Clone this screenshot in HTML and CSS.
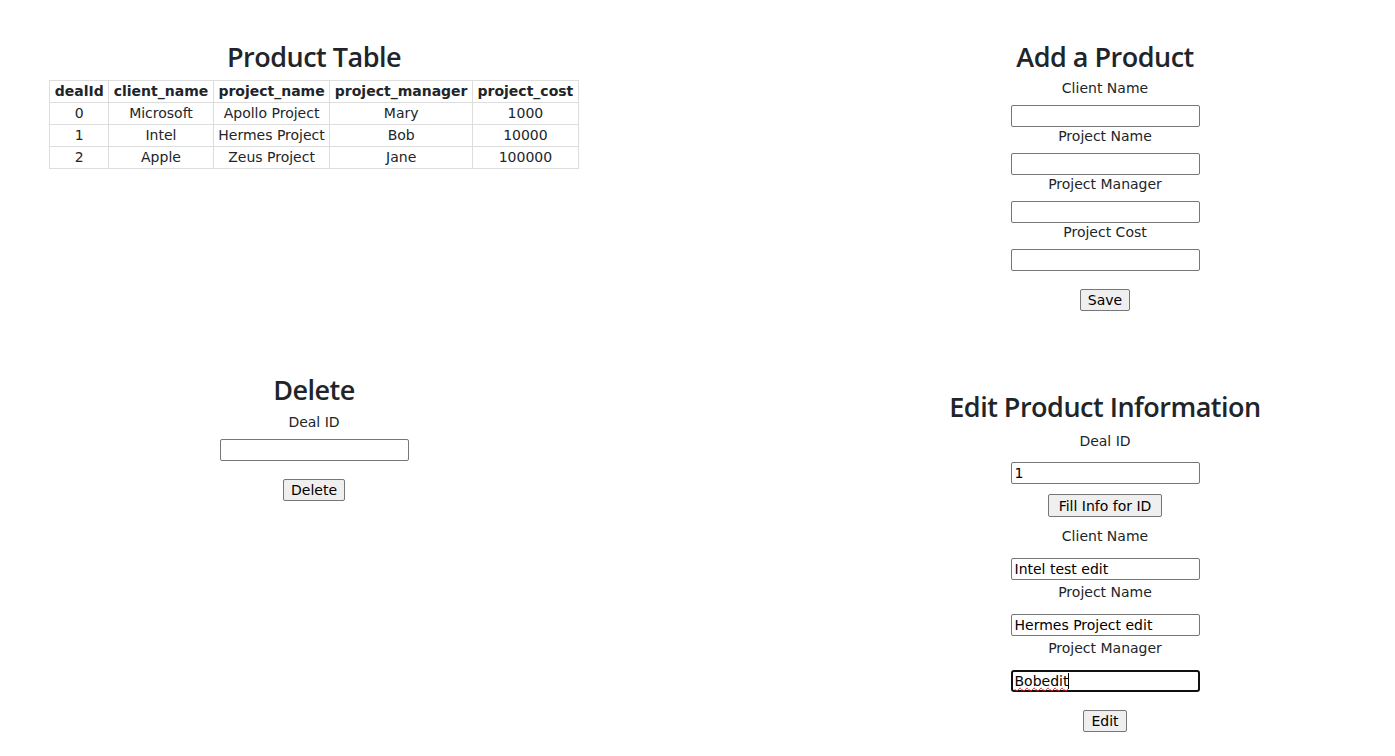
FILE: index.html
```html
<!DOCTYPE html>
<html lang="en">
<head>
<meta charset="utf-8">
<title>Products</title>
<link rel="stylesheet" href="styles.css">
</head>
<body>
<main class="page">
  <section class="panel panel-table">
    <h3 class="title">Product Table</h3>
    <table class="products">
      <thead>
        <tr><th>dealId</th><th>client_name</th><th>project_name</th><th>project_manager</th><th>project_cost</th></tr>
      </thead>
      <tbody>
        <tr><td>0</td><td>Microsoft</td><td>Apollo Project</td><td>Mary</td><td>1000</td></tr>
        <tr><td>1</td><td>Intel</td><td>Hermes Project</td><td>Bob</td><td>10000</td></tr>
        <tr><td>2</td><td>Apple</td><td>Zeus Project</td><td>Jane</td><td>100000</td></tr>
      </tbody>
    </table>
  </section>

  <section class="panel panel-add">
    <h3 class="title">Add a Product</h3>
    <form class="form form-add">
      <label class="lbl">Client Name</label>
      <input class="field" type="text">
      <label class="lbl">Project Name</label>
      <input class="field" type="text">
      <label class="lbl">Project Manager</label>
      <input class="field" type="text">
      <label class="lbl">Project Cost</label>
      <input class="field" type="text">
      <button class="btn btn-submit" type="button">Save</button>
    </form>
  </section>

  <section class="panel panel-delete">
    <h3 class="title">Delete</h3>
    <form class="form">
      <label class="lbl">Deal ID</label>
      <input class="field" type="text">
      <button class="btn btn-submit" type="button">Delete</button>
    </form>
  </section>

  <section class="panel panel-edit">
    <h3 class="title">Edit Product Information</h3>
    <form class="form form-edit">
      <label class="lbl lbl-edit lbl-first">Deal ID</label>
      <input class="field" type="text" value="1">
      <button class="btn btn-fill" type="button">Fill Info for ID</button>
      <label class="lbl lbl-edit lbl-after-btn">Client Name</label>
      <input class="field" type="text" value="Intel test edit">
      <label class="lbl lbl-edit">Project Name</label>
      <input class="field" type="text" value="Hermes Project edit">
      <label class="lbl lbl-edit">Project Manager</label>
      <div class="field-wrap">
        <input class="field field-focused" type="text" value="Bobedit">
        <span class="spell" aria-hidden="true">Bobedit</span>
      </div>
      <button class="btn btn-submit" type="button">Edit</button>
    </form>
  </section>
</main>
</body>
</html>
```

FILE: styles.css
```css
html, body {
  margin: 0;
  padding: 0;
  background: #ffffff;
}

body {
  font-family: "DejaVu Sans", Verdana, sans-serif;
  font-size: 14px;
  line-height: 19px;
  color: #212529;
}

.page {
  display: grid;
  grid-template-columns: 628px 1fr 580px;
  row-gap: 62px;
  padding-top: 40px;
}

.panel {
  display: flex;
  flex-direction: column;
  align-items: center;
  text-align: center;
}

.panel-table { grid-column: 1; grid-row: 1; }
.panel-add { grid-column: 3; grid-row: 1; }
.panel-delete { grid-column: 1; grid-row: 2; }
.panel-edit { grid-column: 3; grid-row: 2; padding-top: 17px; }

.title {
  margin: 0 0 6px;
  font-family: "Open Sans", "Noto Sans", sans-serif;
  font-weight: 600;
  font-size: 27px;
  line-height: 34px;
  letter-spacing: -0.5px;
  color: #212529;
}

.products {
  border-collapse: collapse;
}

.products th,
.products td {
  border: 1px solid #dddddd;
  padding: 0 4.5px;
  text-align: center;
  line-height: 21px;
  white-space: nowrap;
}

.products th {
  font-weight: bold;
}

.form {
  display: flex;
  flex-direction: column;
  align-items: center;
}

.form-add {
  margin-top: -1px;
}

.lbl {
  display: block;
  margin-bottom: 7px;
}

.lbl-edit {
  margin-top: 3px;
  margin-bottom: 12px;
}

.lbl-first {
  margin-top: 2px;
  margin-bottom: 11px;
}

.lbl-after-btn {
  margin-top: 10px;
}

.field {
  box-sizing: border-box;
  width: 189px;
  height: 22px;
  margin: 0;
  padding: 0 3px;
  border: 1px solid #767676;
  border-radius: 2px;
  background: #ffffff;
  font-family: "DejaVu Sans", Verdana, sans-serif;
  font-size: 14px;
  color: #000000;
  outline: none;
}

.field-wrap {
  position: relative;
  width: 189px;
  height: 22px;
}

.field-focused {
  display: block;
  border: 2px solid #101010;
  border-radius: 3px;
  padding: 0 2px;
}

.spell {
  position: absolute;
  left: 4px;
  top: 2px;
  font-family: "DejaVu Sans", Verdana, sans-serif;
  font-size: 14px;
  line-height: 18px;
  color: transparent;
  text-decoration: underline wavy #e02020;
  text-decoration-thickness: 1px;
  text-underline-offset: 1px;
  pointer-events: none;
}

.spell::after {
  content: "";
  position: absolute;
  right: -1px;
  top: 1px;
  width: 1px;
  height: 16px;
  background: #000000;
}

.btn {
  box-sizing: border-box;
  height: 22px;
  margin: 0;
  padding: 0 7px;
  border: 1px solid #767676;
  border-radius: 2px;
  background: #efefef;
  font-family: "DejaVu Sans", Verdana, sans-serif;
  font-size: 14px;
  line-height: 18px;
  color: #000000;
}

.btn-submit {
  margin-top: 18px;
}

.btn-fill {
  height: 23px;
  margin-top: 10px;
  padding: 0 10px;
}
```
